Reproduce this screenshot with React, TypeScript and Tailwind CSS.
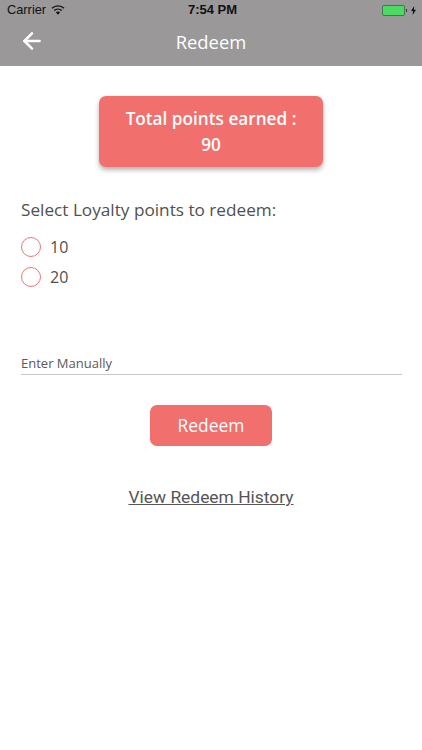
import { ArrowLeft } from "lucide-react";

const openSans = { fontFamily: '"Open Sans", sans-serif' };

function Wifi() {
  return (
    <svg width="14" height="10" viewBox="0 0 14 10" className="ml-[5px]">
      <path d="M7 9.8 L4.9 7.3 A3.2 3.2 0 0 1 9.1 7.3 Z" fill="#111" />
      <path d="M3.2 5.6 A5.6 5.6 0 0 1 10.8 5.6" fill="none" stroke="#111" strokeWidth="1.4" />
      <path d="M1 3.3 A8.6 8.6 0 0 1 13 3.3" fill="none" stroke="#111" strokeWidth="1.4" />
    </svg>
  );
}

function Battery() {
  return (
    <div className="flex items-center">
      <div className="w-[23px] h-[11px] rounded-[2px] border border-[#3f7a4d] bg-[#4cd964]" />
      <div className="w-[1px] h-[3px] bg-[#333] ml-[1px]" />
      <svg width="5" height="9" viewBox="0 0 5 9" className="ml-[4px]">
        <path d="M3.2 0 L0 5 H2 L1.6 9 L5 3.8 H2.9 Z" fill="#111" />
      </svg>
    </div>
  );
}

function Radio({ label }: { label: string }) {
  return (
    <div className="flex items-center h-[20px]">
      <div className="w-[20px] h-[20px] rounded-full border-[1.5px] border-[#e8777b]" />
      <span className="ml-[9px] text-[16px] text-[#505050]">{label}</span>
    </div>
  );
}

export default function App() {
  return (
    <div className="w-[422px] h-[750px] bg-white flex flex-col antialiased" style={openSans}>
      <div className="bg-[#9a9898] h-[66px] flex flex-col shrink-0">
        <div className="h-[20px] flex items-center justify-between pl-[7px] pr-[6px] relative text-[#111] text-[12.8px]" style={{ fontFamily: '"Liberation Sans", sans-serif' }}>
          <div className="flex items-center">
            <span>Carrier</span>
            <Wifi />
          </div>
          <span className="absolute left-[3px] right-0 text-center font-bold text-[13px]">7:54 PM</span>
          <Battery />
        </div>
        <div className="flex-1 flex items-center justify-center relative">
          <ArrowLeft className="absolute left-[19px] top-[8px] text-white" size={26} strokeWidth={2.3} />
          <span className="text-white text-[18.4px] -mt-[2px]">Redeem</span>
        </div>
      </div>

      <div className="flex flex-col items-center pt-[30px]">
        <div className="w-[224px] h-[71px] rounded-[7px] bg-[#f16f6d] shadow-[0_3px_5px_rgba(0,0,0,0.3)] flex flex-col items-center justify-center text-white font-semibold text-[17.2px] leading-[26px]">
          <span>Total points earned :</span>
          <span>90</span>
        </div>
      </div>

      <div className="pl-[21px] pr-[20px] pt-[31px] text-[#505050]">
        <div className="text-[17.2px] leading-[24px]">Select Loyalty points to redeem:</div>
        <div className="flex flex-col gap-[10px] mt-[15px]">
          <Radio label="10" />
          <Radio label="20" />
        </div>
        <div className="mt-[66px] border-b border-[#c9c9c9] h-[22px] text-[13px] leading-[20px] text-[#5a5a5a]">
          Enter Manually
        </div>
      </div>

      <div className="flex flex-col items-center">
        <div className="mt-[30px] w-[122px] h-[41px] rounded-[7px] bg-[#f16f6d] flex items-center justify-center text-white text-[17.4px]">
          Redeem
        </div>
        <div className="mt-[38px] text-[17.4px] text-[#555] underline" style={{ fontFamily: "Roboto, sans-serif" }}>
          View Redeem History
        </div>
      </div>
    </div>
  );
}
